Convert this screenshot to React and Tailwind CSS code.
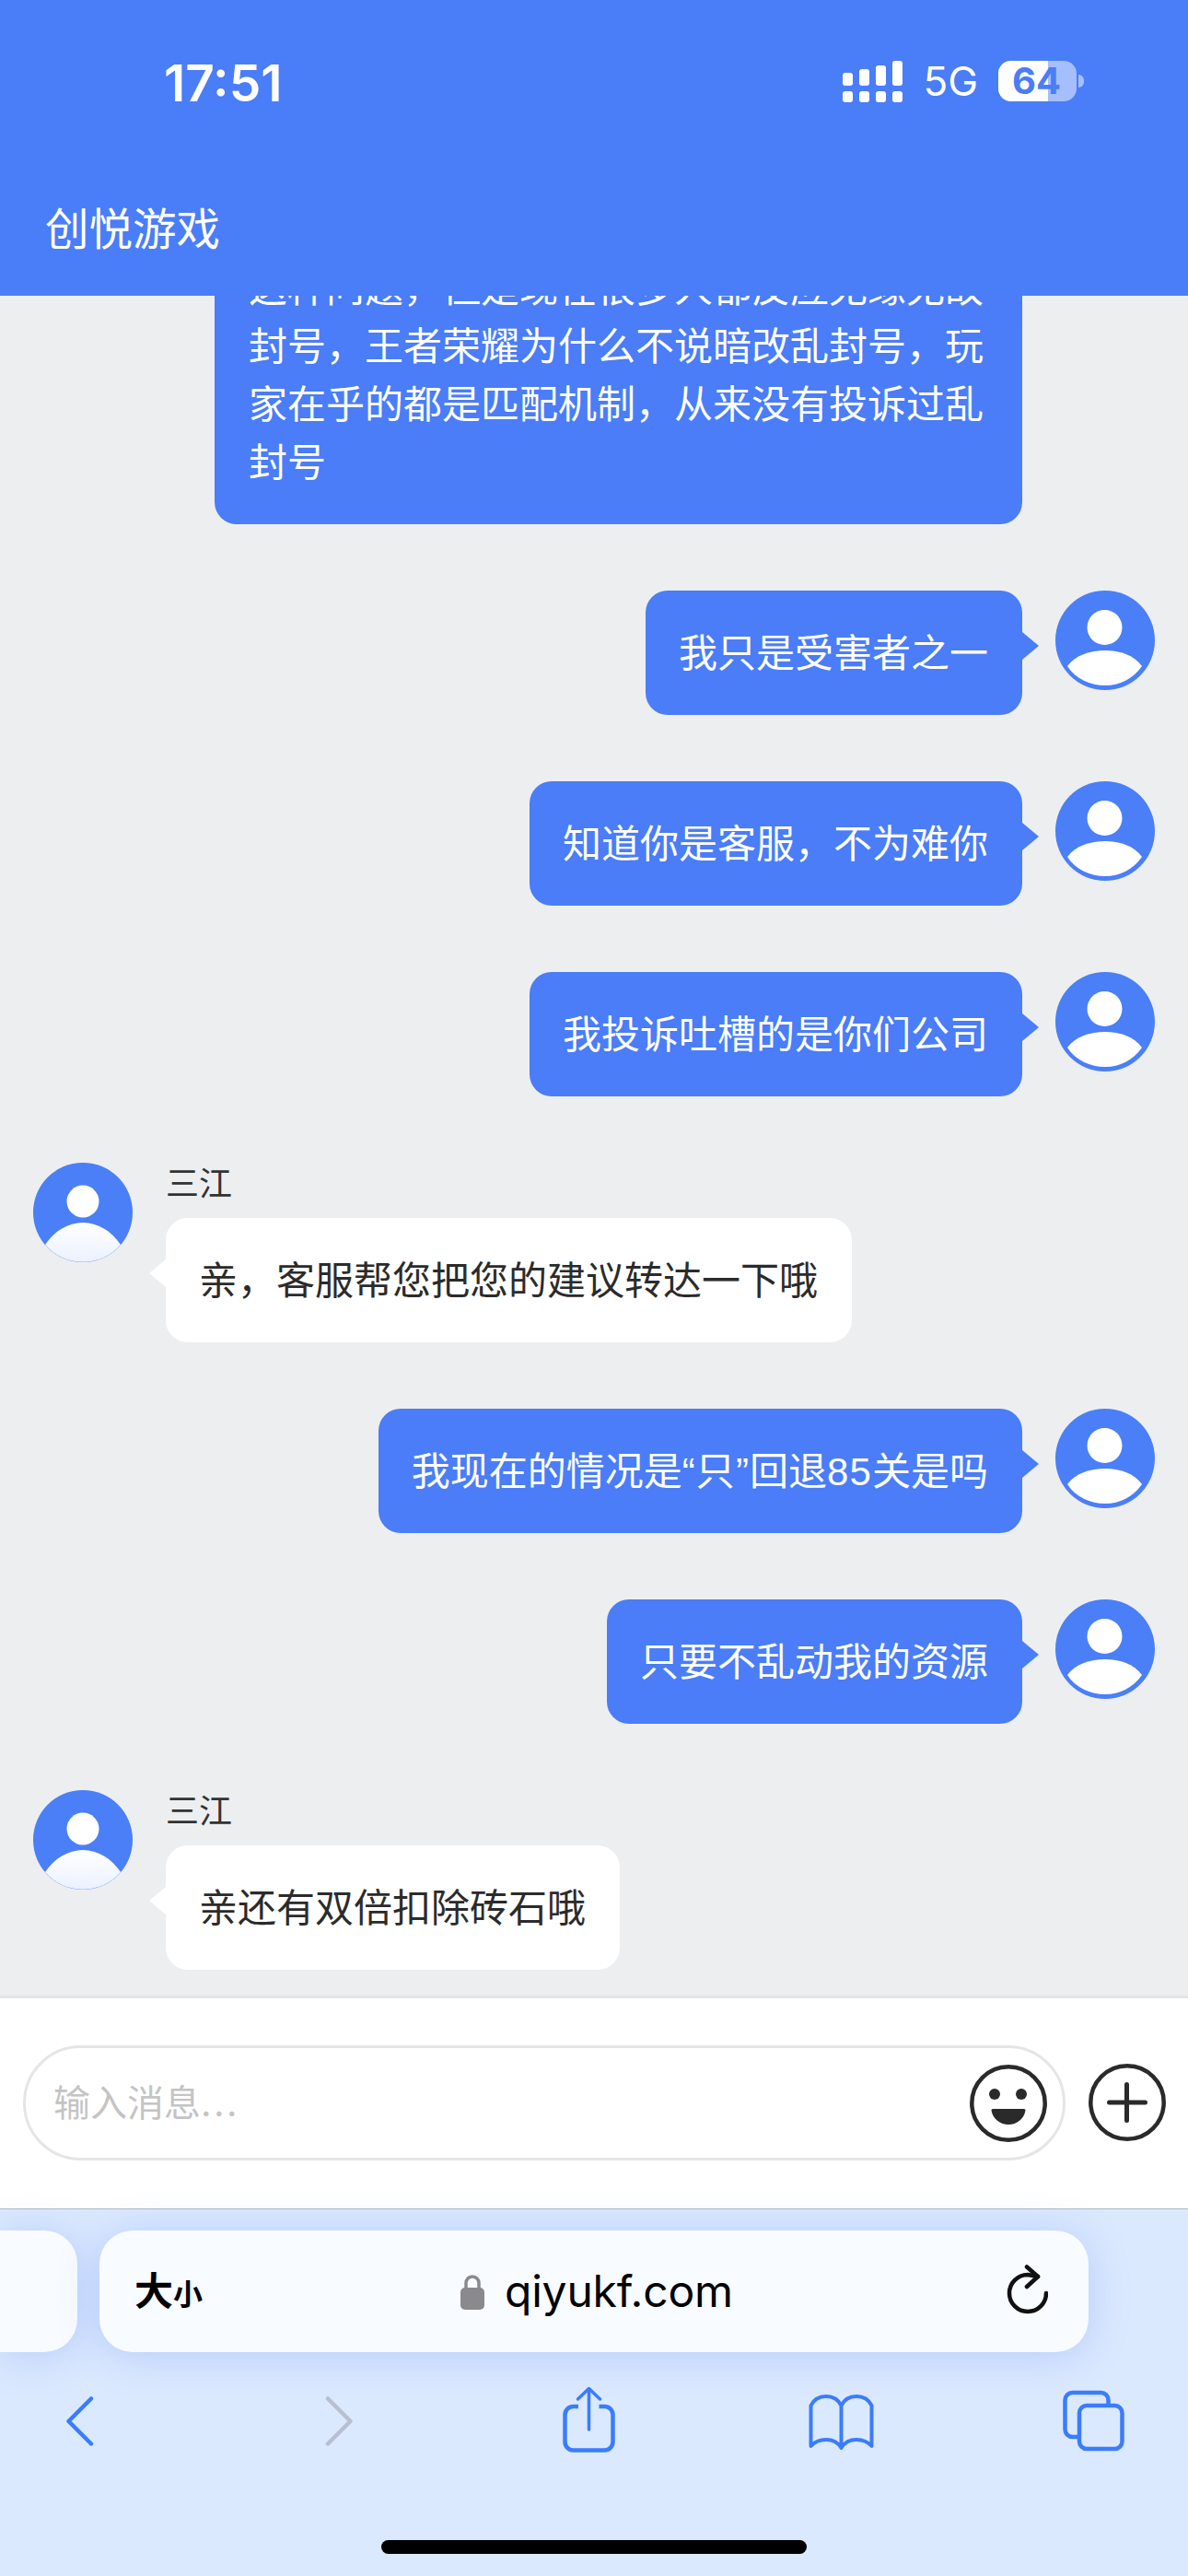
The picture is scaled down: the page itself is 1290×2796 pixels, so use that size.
const cjk = 'font-["Inter","Noto_Sans_CJK_SC",sans-serif]';
const bubbleFont = 'font-["Liberation_Sans","Noto_Sans_CJK_SC",sans-serif]';

function UserAvatar() {
  return (
    <svg width="108" height="108" viewBox="0 0 108 108" className="shrink-0">
      <circle cx="54" cy="54" r="54" fill="#4a7ff7" />
      <circle cx="53.5" cy="40" r="19" fill="#fff" />
      <path d="M13 82 C22 70 38 65 54 65 C70 65 85 70 94 82 C84 96 70 103 54 103 C38 103 22 96 13 82 Z" fill="#fff" />
    </svg>
  );
}

function AgentAvatar({ id }) {
  return (
    <svg width="108" height="108" viewBox="0 0 108 108" className="shrink-0">
      <defs>
        <linearGradient id={id} x1="0" y1="0" x2="0" y2="1">
          <stop offset="0" stopColor="#ffffff" />
          <stop offset="1" stopColor="#ebf1ff" />
        </linearGradient>
      </defs>
      <circle cx="54" cy="54" r="54" fill="#4a7ff7" />
      <circle cx="54" cy="42" r="17.5" fill="#fff" />
      <path d="M13 89 C23 74 38 65 54 65 C70 65 85 74 95 89 A54 54 0 0 1 13 89 Z" fill={`url(#${id})`} />
    </svg>
  );
}

function MyMessage({ children }) {
  return (
    <div className="flex justify-end gap-[36px] pr-[36px]">
      <div className={`relative rounded-[24px] bg-[#4a7df7] pb-[35px] pl-[36px] pr-[37px] pt-[37px] text-[42px] leading-[63px] text-white ${bubbleFont}`}>
        {children}
        <span className="absolute left-full top-[45px] border-y-[15px] border-l-[18px] border-y-transparent border-l-[#4a7df7]" />
      </div>
      <UserAvatar />
    </div>
  );
}

function AgentMessage({ id, text }) {
  return (
    <div className="flex gap-[36px] pl-[36px]">
      <AgentAvatar id={id} />
      <div>
        <div className="h-[60px] text-[36px] leading-[46px] text-[#333]">三江</div>
        <div className={`relative w-fit rounded-[24px] bg-white pb-[35px] pl-[36px] pr-[37px] pt-[37px] text-[42px] leading-[63px] text-[#2b2b2b] ${bubbleFont}`}>
          {text}
          <span className="absolute right-full top-[45px] border-y-[15px] border-r-[18px] border-y-transparent border-r-white" />
        </div>
      </div>
    </div>
  );
}

function Signal() {
  const tops = [[13, 14], [9, 18], [5, 22], [0, 27]];
  return (
    <svg width="65" height="45" viewBox="0 0 65 45">
      {tops.map(([y, h], i) => (
        <g key={i} fill="#fff">
          <rect x={i * 18} y={y} width="11" height={h} rx="3" />
          <rect x={i * 18} y="33" width="11" height="12" rx="3" />
        </g>
      ))}
    </svg>
  );
}

function Battery() {
  return (
    <div className="flex items-center gap-[2px]">
      <div className="relative h-[44px] w-[85px] overflow-hidden rounded-[14px] bg-white/50">
        <div className="absolute inset-y-0 left-0 w-[54px] bg-white" />
        <div className="absolute inset-0 flex items-center justify-center pr-[2px] text-[40px] font-bold leading-none text-[#4a7df7]">64</div>
      </div>
      <div className="h-[14px] w-[6px] rounded-r-full bg-white/50" />
    </div>
  );
}

function Smile() {
  return (
    <svg width="84" height="84" viewBox="0 0 84 84" className="shrink-0">
      <circle cx="42" cy="42" r="39.7" fill="none" stroke="#2a2a2a" strokeWidth="4.5" />
      <circle cx="27" cy="32" r="6" fill="#2a2a2a" />
      <circle cx="56" cy="32" r="6" fill="#2a2a2a" />
      <path d="M25 48 H59 Q60.5 48 60.5 49.5 C59 59 51 65 42 65 C33 65 25 59 23.5 49.5 Q23.5 48 25 48 Z" fill="#2a2a2a" />
    </svg>
  );
}

function Plus() {
  return (
    <svg width="84" height="84" viewBox="0 0 84 84" className="shrink-0">
      <circle cx="42" cy="42" r="39.7" fill="none" stroke="#2a2a2a" strokeWidth="4.5" />
      <path d="M22.5 42 H61.5 M41.5 22.5 V61.5" fill="none" stroke="#2a2a2a" strokeWidth="5" strokeLinecap="round" />
    </svg>
  );
}

const toolbarStroke = { fill: 'none', stroke: '#3a7cfc', strokeLinecap: 'round', strokeLinejoin: 'round' };

export default function App() {
  return (
    <div className={`flex h-[2796px] w-[1290px] flex-col overflow-hidden bg-[#edeef0] ${cjk}`}>
      {/* top bar */}
      <div className="relative z-10 flex h-[321px] shrink-0 flex-col bg-[#4a7df8] text-white">
        <div className="mt-[60px] flex h-[56px] items-center justify-between pl-[178px] pr-[113px]">
          <span className="pt-[4px] text-[55px] font-semibold leading-none">17:51</span>
          <div className="flex items-center">
            <Signal />
            <span className="ml-[22px] mr-[22px] text-[44px] leading-none">5G</span>
            <Battery />
          </div>
        </div>
        <div className="mt-[105px] pl-[49px] text-[47.5px] leading-[56px]">创悦游戏</div>
      </div>

      {/* messages */}
      <div className="flex min-h-0 flex-1 flex-col gap-[72px] overflow-hidden">
        <div className="-mt-[76px] flex justify-end pr-[180px]">
          <div className={`w-[877px] rounded-[24px] bg-[#4a7df7] pb-[35px] pl-[37px] pr-[36px] pt-[37px] text-[42px] leading-[63px] text-white ${bubbleFont}`}>
            这种问题，但是现在很多人都反应无缘无故封号，王者荣耀为什么不说暗改乱封号，玩家在乎的都是匹配机制，从来没有投诉过乱封号
          </div>
        </div>
        <MyMessage>我只是受害者之一</MyMessage>
        <MyMessage>知道你是客服，不为难你</MyMessage>
        <MyMessage>我投诉吐槽的是你们公司</MyMessage>
        <AgentMessage id="a1" text="亲，客服帮您把您的建议转达一下哦" />
        <MyMessage>
          我现在的情况是<span className="tracking-[1.1px]">“只”</span>回退<span className="tracking-[1.1px]">85</span>关是吗
        </MyMessage>
        <MyMessage>只要不乱动我的资源</MyMessage>
        <AgentMessage id="a2" text="亲还有双倍扣除砖石哦" />
      </div>

      {/* input */}
      <div className="flex h-[231px] shrink-0 items-start gap-[25px] border-t-[3px] border-[#e3e4e6] bg-white pl-[25px] pt-[51px]">
        <div className="flex h-[125px] w-[1132px] items-center justify-between rounded-full border-[3px] border-[#e5e5e5] pl-[30px] pr-[17px]">
          <span className="text-[40px] text-[#c4c4c4]">输入消息<span className="tracking-[2.5px]">...</span></span>
          <Smile />
        </div>
        <div className="pt-[20px]">
          <Plus />
        </div>
      </div>

      {/* safari bar */}
      <div className="h-[399px] shrink-0 border-t border-[#aeb8c8] bg-[#dbe9fe]">
        <div className="flex gap-[24px] pt-[23px]">
          <div className="h-[132px] w-[84px] rounded-r-[36px] bg-[#f8fbff] shadow-[0_4px_44px_rgba(90,130,240,0.28)]" />
          <div className="flex h-[132px] w-[1074px] items-center rounded-[36px] bg-[#f8fbff] pl-[38px] pr-[44px] shadow-[0_4px_44px_rgba(90,130,240,0.28)]">
            <div className="flex w-[354px] items-baseline text-black">
              <span className="text-[42px] font-semibold leading-none">大</span>
              <span className="text-[32px] font-semibold leading-none">小</span>
            </div>
            <svg width="26" height="39" viewBox="0 0 26 39" className="shrink-0">
              <path d="M6 18 V10 a7 7 0 0 1 14 0 V18" fill="none" stroke="#8a8a8e" strokeWidth="3.5" />
              <rect x="0" y="15" width="26" height="24" rx="5" fill="#8a8a8e" />
            </svg>
            <span className="ml-[22px] flex-1 text-[48px] leading-none tracking-[-0.2px] text-black">qiyukf.com</span>
            <svg width="45" height="54" viewBox="0 0 45 54" className="mb-[4px] shrink-0">
              <path d="M43 31 A20 20 0 1 1 23 11 L34 13" fill="none" stroke="#111" strokeWidth="4.5" strokeLinecap="round" strokeLinejoin="round" />
              <path d="M22 2.5 L34 13 L22 24" fill="none" stroke="#111" strokeWidth="4.5" strokeLinecap="round" strokeLinejoin="round" />
            </svg>
          </div>
        </div>

        <div className="flex pl-[71px] pt-[37px]">
          <svg width="31" height="72" viewBox="0 0 31 72" {...toolbarStroke} strokeWidth="4.5">
            <path d="M28 13.5 L3.5 38 L28 62.5" />
          </svg>
          <svg width="31" height="72" viewBox="0 0 31 72" className="ml-[251px]" {...toolbarStroke} stroke="#b7bfd0" strokeWidth="4.5">
            <path d="M3 13.5 L27.5 38 L3 62.5" />
          </svg>
          <svg width="57" height="72" viewBox="0 0 57 72" className="ml-[227px]" {...toolbarStroke} strokeWidth="4.5">
            <path d="M17 22 H11.5 a9 9 0 0 0 -9 9 V60.5 a9 9 0 0 0 9 9 H45.5 a9 9 0 0 0 9 -9 V31 a9 9 0 0 0 -9 -9 H39.5" strokeLinecap="butt" />
            <path d="M28.5 2.5 V47 M16.5 14 L28.5 2.5 L40.5 14" strokeWidth="3.5" />
          </svg>
          <svg width="71" height="72" viewBox="0 0 71 72" className="ml-[210px]" {...toolbarStroke} strokeWidth="4">
            <path d="M2.5 21 C6 14 12 11 19 11 C26 11 32 14 35.5 21 C39 14 45 11 52 11 C59 11 65 14 68.5 21 V65 C64 60 58 58 52 58 C45 58 39 61 35.5 67 C32 61 26 58 19 58 C12 58 7 60 2.5 65 Z M35.5 21 V67" />
          </svg>
          <svg width="67" height="72" viewBox="0 0 67 72" className="ml-[205px]" {...toolbarStroke} strokeWidth="4.5">
            <path d="M49.5 20 V15 a8 8 0 0 0 -8 -8 H10.5 a8 8 0 0 0 -8 8 V47 a8 8 0 0 0 8 8 H16" strokeLinecap="butt" />
            <rect x="18" y="21" width="46.5" height="47" rx="8" />
          </svg>
        </div>

        <div className="ml-[414px] mt-[95px] h-[15px] w-[462px] rounded-full bg-black" />
      </div>
    </div>
  );
}
